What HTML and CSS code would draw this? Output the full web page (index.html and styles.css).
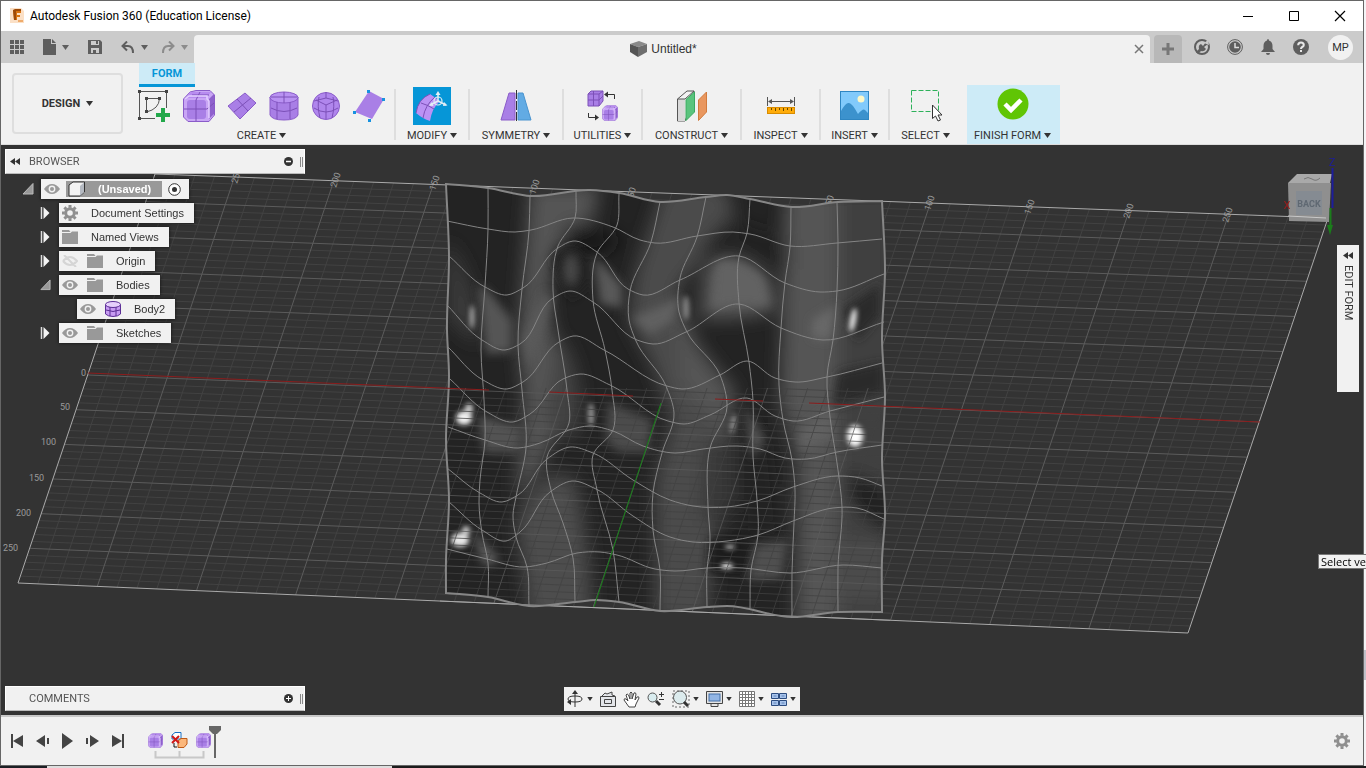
FILE: index.html
```html
<!DOCTYPE html>
<html lang="en">
<head>
<meta charset="utf-8">
<title>Autodesk Fusion 360 (Education License)</title>
<link rel="stylesheet" href="styles.css">
</head>
<body>
<svg class="defs" aria-hidden="true">
  <defs>
    <symbol id="caret" viewBox="0 0 7 5"><path d="M0 0H7L3.500 5Z" fill="currentColor"/></symbol>
    <symbol id="eye" viewBox="0 0 16 12"><path d="M0 6Q3.500 1 8 1T16 6Q12.500 11 8 11T0 6Z" fill="#999"/><circle cx="8" cy="6" r="3.400" fill="#f1f1f1"/><circle cx="8" cy="6" r="2" fill="#999"/></symbol>
    <symbol id="folder" viewBox="0 0 16 14"><path d="M0 0H7L8.500 2H0ZM0 3H8.500L10 1.500H16V14H0Z" fill="#999"/></symbol>
    <symbol id="gear" viewBox="0 0 16 16"><path d="M8 2.800V0M8 13.200V16M2.800 8H0M13.200 8H16M4.300 4.300L2.400 2.400M11.700 11.700L13.600 13.600M4.300 11.700L2.400 13.600M11.700 4.300L13.600 2.400" stroke="#8f8f8f" stroke-width="3"/><circle cx="8" cy="8" r="4.300" fill="none" stroke="#8f8f8f" stroke-width="3"/></symbol>
    <symbol id="closed" viewBox="0 0 10 14"><path d="M1 1V13" stroke="#ddd" stroke-width="1.500"/><path d="M3 1L9 7L3 13Z" fill="#f4f4f4"/></symbol>
    <symbol id="open" viewBox="0 0 12 12"><path d="M11 0.500V11H1Z" fill="#999" stroke="#bbb"/></symbol>
    <symbol id="formbox" viewBox="0 0 32 32">
      <path d="M7 2L13 0.500H27L31.500 5V25L26 31.500H5L0.500 27V9Z" fill="#c9a6f5" stroke="#8a5cc9"/>
      <path d="M7 2H28L23 8H3Z" fill="#b88cf0"/><path d="M26 9L31 4V24L26 29Z" fill="#8f61cd"/>
      <rect x="4" y="10" width="19" height="19" rx="3" fill="#a97fe6"/>
      <path d="M13 10L17 2M13 10V31M1 19H24L31 13M9 5H26" fill="none" stroke="#7c50b8"/>
      <path d="M2 9L6 6H24V9L26 11V28" fill="none" stroke="#e3cfff" stroke-width="1.500"/>
    </symbol>
    <symbol id="rewind" viewBox="0 0 10 7"><path d="M5 0V7L0 3.500ZM10 0V7L5 3.500Z" fill="#333"/></symbol>
  </defs>
</svg>

<main class="window">
  <header class="titlebar">
    <svg class="logo" width="16" height="16" viewBox="0 0 16 16"><path d="M1 0H12L15 3V15H1Z" fill="#fbe0c6"/><path d="M4 2H12V5H8V7H11V9H8V12H5Z" fill="#d9730f"/><path d="M4 2L6 1H12V3H7V12H5Z" fill="#9d4a08"/><path d="M9 12H14V14H9Z" fill="#efac6c"/></svg>
    <h1 class="app-name">Autodesk Fusion 360 (Education License)</h1>
    <button class="win-btn" aria-label="Minimize"><svg width="12" height="12"><path d="M1 6.500H11" stroke="#000"/></svg></button>
    <button class="win-btn" aria-label="Maximize"><svg width="12" height="12"><path d="M1.500 1.500H10.500V10.500H1.500Z" fill="none" stroke="#000"/></svg></button>
    <button class="win-btn" aria-label="Close"><svg width="12" height="12"><path d="M1 1L11 11M11 1L1 11" stroke="#000" stroke-width="1.200"/></svg></button>
  </header>

  <div class="tabbar">
    <div class="quick">
      <button class="qbtn" aria-label="Data panel"><svg width="14" height="14"><path d="M0 0h4v4h-4zM5 0h4v4h-4zM10 0h4v4h-4zM0 5h4v4h-4zM5 5h4v4h-4zM10 5h4v4h-4zM0 10h4v4h-4zM5 10h4v4h-4zM10 10h4v4h-4z" fill="#5e5e5e"/></svg></button>
      <button class="qbtn" aria-label="File"><svg width="13" height="16"><path d="M0 0H8V5H13V16H0ZM9 0L13 4H9Z" fill="#5e5e5e"/></svg><svg class="caret" width="7" height="5"><use href="#caret"/></svg></button>
      <button class="qbtn" aria-label="Save"><svg width="14" height="14"><path d="M0 0H12L14 2V14H0Z" fill="#5e5e5e"/><path d="M3 1H11V5H3ZM3 8H11V13H3Z" fill="#cbcbcb"/><path d="M8 1h2v3h-2zM5 10h3v4h-3z" fill="#5e5e5e"/></svg></button>
      <button class="qbtn" aria-label="Undo"><svg width="14" height="13"><path d="M1 5H7Q12 5 12 12M6 0.500L1.500 5L6 9.500" fill="none" stroke="#5e5e5e" stroke-width="2"/></svg><svg class="caret" width="7" height="5"><use href="#caret"/></svg></button>
      <button class="qbtn faded" aria-label="Redo"><svg width="14" height="13"><path d="M13 5H7Q2 5 2 12M8 0.500L12.500 5L8 9.500" fill="none" stroke="#8c8c8c" stroke-width="2"/></svg><svg class="caret" width="7" height="5"><use href="#caret"/></svg></button>
    </div>
    <div class="doc-tab">
      <div class="doc-title"><svg width="17" height="16" viewBox="0 0 17 16"><path d="M0 3L9 0L17 3L8 6Z" fill="#8a8a8a"/><path d="M0 3L8 6V16L0 11Z" fill="#555"/><path d="M8 6L17 3V11L8 16Z" fill="#6e6e6e"/></svg><span>Untitled*</span></div>
      <button class="doc-close" aria-label="Close document"><svg width="10" height="10"><path d="M1 1L9 9M9 1L1 9" stroke="#777" stroke-width="1.500"/></svg></button>
    </div>
    <button class="new-tab" aria-label="New design"><svg width="14" height="14"><path d="M7 1V13M1 7H13" stroke="#777" stroke-width="3"/></svg></button>
    <div class="account">
      <button class="abtn" aria-label="Extensions"><svg width="16" height="16"><circle cx="8" cy="8" r="7" fill="none" stroke="#5e5e5e" stroke-width="2"/><path d="M2 13L5 10Q4 6 7 5L9 7L12 3L14 5L10 8L12 10Q10 13 7 12L4 15Z" fill="#5e5e5e"/><path d="M10 4L14 1L15 6Z" fill="#cbcbcb"/></svg></button>
      <button class="abtn" aria-label="Job status"><svg width="16" height="16"><circle cx="8" cy="8" r="7.400" fill="none" stroke="#5e5e5e"/><circle cx="8" cy="8" r="5.800" fill="#5e5e5e"/><path d="M8 4V8.500H12" fill="none" stroke="#ddd" stroke-width="1.500"/></svg></button>
      <button class="abtn" aria-label="Notifications"><svg width="14" height="16"><path d="M7 0Q8 0 8 1.500Q11.500 2.500 11.500 7V10L14 13H0L2.500 10V7Q2.500 2.500 6 1.500Q6 0 7 0ZM5 14H9Q9 16 7 16T5 14Z" fill="#5e5e5e"/></svg></button>
      <button class="abtn" aria-label="Help"><svg width="16" height="16"><circle cx="8" cy="8" r="8" fill="#5e5e5e"/><path d="M5.200 6.200Q5.200 3.500 8 3.500T10.800 6Q10.800 7.200 9.200 8Q8 8.600 8 10" fill="none" stroke="#e8e8e8" stroke-width="2"/><rect x="7" y="11" width="2" height="2" fill="#e8e8e8"/></svg></button>
      <button class="avatar">MP</button>
    </div>
  </div>

  <section class="ribbon">
    <button class="workspace">DESIGN <svg width="7" height="5"><use href="#caret"/></svg></button>
    <div class="ribbon-main">
      <button class="mode-tab">FORM</button>
      <div class="groups">
        <div class="group create">
          <div class="icons">
            <svg width="34" height="34" viewBox="0 0 34 34"><path d="M2.500 2.500H29.500V19M2.500 2.500V29.500H18" fill="none" stroke="#555"/><path d="M9.500 9.500H22.500Q22 20 9.500 23V9.500" fill="none" stroke="#555"/><path d="M1 1h3v3h-3zM28 1h3v3h-3zM1 28h3v3h-3zM8 8h3v3h-3zM21 8h3v3h-3zM8 21h3v3h-3z" fill="#444"/><path d="M26 19V33M19 26H33" stroke="#22a84a" stroke-width="4"/></svg>
            <svg width="32" height="32"><use href="#formbox"/></svg>
            <svg width="30" height="28" viewBox="0 0 30 28"><path d="M18 1L29 11L13 27L1 14Z" fill="#a97fe6" stroke="#8a5cc9"/><path d="M10 7L21 19M24 6L7 20" stroke="#7c50b8"/></svg>
            <svg width="30" height="30" viewBox="0 0 30 30"><path d="M1 6V24Q3 29 15 29T29 24V6Z" fill="#a97fe6" stroke="#8a5cc9"/><ellipse cx="15" cy="6.500" rx="14" ry="5.500" fill="#b992f2" stroke="#8a5cc9"/><path d="M2 17Q15 24 28 17M8 11V28M21 11V28M15 1V12M2 6H28" fill="none" stroke="#7c50b8"/></svg>
            <svg width="30" height="30" viewBox="0 0 30 30"><circle cx="15" cy="15" r="13.500" fill="#b086ed" stroke="#8a5cc9"/><path d="M15 1V7L27 10M15 7L3 10M5 9L15 14L26 9M15 14V28M3 17Q15 25 27 17M8 6Q6 15 9 27M22 6Q24 15 21 27" fill="none" stroke="#7c50b8"/></svg>
            <svg width="34" height="34" viewBox="0 0 34 34"><path d="M16 2L31 10L19 30L2 23Z" fill="#a97fe6"/><path d="M14 1h3v3h-3zM29 9h3v3h-3zM0 22h3v3h-3zM15 30h3v3h-3z" fill="#1692e0"/></svg>
          </div>
          <button class="glabel">CREATE <svg width="7" height="5"><use href="#caret"/></svg></button>
        </div>
        <div class="group">
          <div class="icons"><svg class="active" width="38" height="38" viewBox="0 0 38 38"><path d="M3 26Q5 12 17 7L27 14Q19 21 17 34Q10 32 3 26Z" fill="#bb92f5"/><path d="M8 16Q15 18 21 22M10 31Q12 18 22 10M3 26Q5 12 17 7" fill="none" stroke="#7c50b8"/><path d="M25 14V6M25 14L17 18M25 14L33 18" stroke="#e3eef5" stroke-width="1.500"/><circle cx="25" cy="14" r="4" fill="none" stroke="#e3eef5" stroke-width="1.200"/><path d="M22.500 8L25 4L27.500 8ZM19 15L16 18.500L20.500 19ZM31 15L34.500 18.500L30 19Z" fill="#e3eef5"/></svg></div>
          <button class="glabel">MODIFY <svg width="7" height="5"><use href="#caret"/></svg></button>
        </div>
        <div class="group">
          <div class="icons"><svg width="32" height="32" viewBox="0 0 32 32"><path d="M9 3H15V30H1Z" fill="#a97fe6" stroke="#8a5cc9"/><path d="M18 3H23L31 30H18Z" fill="#62abe4" stroke="#4a94cf"/><path d="M16.500 0V32" stroke="#333" stroke-dasharray="9 2"/></svg></div>
          <button class="glabel">SYMMETRY <svg width="7" height="5"><use href="#caret"/></svg></button>
        </div>
        <div class="group">
          <div class="icons"><svg width="32" height="32" viewBox="0 0 32 32"><path d="M1 4L4 1H16V11L12 16H1Z" fill="#a97fe6" stroke="#7c50b8"/><path d="M1 4H12V16M12 4L16 1M1 10H12L16 6M6.500 1V16" fill="none" stroke="#7c50b8"/><path d="M27.500 9V4.500H20M1.500 23V27.500H9" fill="none" stroke="#333"/><path d="M21 1.500L17 4.500L21 7.500ZM8 24.500L12 27.500L8 30.500Z" fill="#333"/><svg x="15" y="15" width="16" height="16"><use href="#formbox"/></svg></svg></div>
          <button class="glabel">UTILITIES <svg width="7" height="5"><use href="#caret"/></svg></button>
        </div>
        <div class="group">
          <div class="icons"><svg width="32" height="32" viewBox="0 0 32 32"><path d="M1.500 9L11 1H18V9L9 31H1.500Z" fill="#f3f3f3" stroke="#555"/><path d="M2 9H9V31H2Z" fill="#d9d9d9"/><path d="M1.500 9H9L18 1" fill="none" stroke="#555"/><path d="M10 9.500L18.500 2V22L10 30.500Z" fill="#5ac47d" stroke="#3aa960"/><path d="M22.500 10L30.500 2V22L22.500 30.500Z" fill="#e9975f" stroke="#d27b3d"/></svg></div>
          <button class="glabel">CONSTRUCT <svg width="7" height="5"><use href="#caret"/></svg></button>
        </div>
        <div class="group">
          <div class="icons"><svg width="30" height="18" viewBox="0 0 30 18"><path d="M1.500 0V9M28.500 0V9M3 4.500H27" stroke="#555"/><path d="M2 4.500L6 2V7ZM28 4.500L24 2V7Z" fill="#555"/><rect x="1.500" y="10.500" width="27" height="6" fill="#ffac0a" stroke="#d98c00"/><path d="M5.500 11v2M9.500 11v3M13.500 11v2M17.500 11v3M21.500 11v2M25.500 11v3" stroke="#6b4a00"/></svg></div>
          <button class="glabel">INSPECT <svg width="7" height="5"><use href="#caret"/></svg></button>
        </div>
        <div class="group">
          <div class="icons"><svg width="30" height="30" viewBox="0 0 30 30"><rect x="0.500" y="0.500" width="28" height="28" fill="#82cafb" stroke="#2f86c2"/><circle cx="21" cy="8" r="3.500" fill="#fdf8c8"/><path d="M1 20Q6 11 9 12Q12 12 18 23Q23 17 25 19L28 22V28H1Z" fill="#3c92cd"/></svg></div>
          <button class="glabel">INSERT <svg width="7" height="5"><use href="#caret"/></svg></button>
        </div>
        <div class="group select">
          <div class="icons"><svg width="32" height="34" viewBox="0 0 32 34"><rect x="1.500" y="1.500" width="27" height="21" fill="none" stroke="#2eb15a" stroke-dasharray="5 2"/><path d="M22.500 16V29.500L25.500 27L28 32L30.500 31L28 26H32Z" fill="#fff" stroke="#333"/></svg></div>
          <button class="glabel">SELECT <svg width="7" height="5"><use href="#caret"/></svg></button>
        </div>
        <div class="group finish">
          <div class="icons"><svg width="32" height="32"><circle cx="16" cy="16" r="15.500" fill="#60c505"/><path d="M8 16L14 22L24 12" fill="none" stroke="#fff" stroke-width="4.500"/></svg></div>
          <button class="glabel">FINISH FORM <svg width="7" height="5"><use href="#caret"/></svg></button>
        </div>
      </div>
    </div>
  </section>

  <section class="viewport">
    <svg class="scene" viewBox="1 145 1362 570" preserveAspectRatio="xMidYMid slice">
      <defs>
        <clipPath id="sheet"><path id="sheet-clip"/></clipPath>
        <clipPath id="front"><path d="M440 388H890V628H440Z"/></clipPath>
        <filter id="b2" x="-100%" y="-100%" width="300%" height="300%"><feGaussianBlur stdDeviation="2.500"/></filter>
        <filter id="b5" x="-50%" y="-50%" width="200%" height="200%"><feGaussianBlur stdDeviation="5"/></filter>
        <filter id="b8" x="-50%" y="-50%" width="200%" height="200%"><feGaussianBlur stdDeviation="9"/></filter>
      </defs>
      <g id="grid-back"></g>
      <g class="ruler">
        <text x="81" y="376">0</text><text x="60" y="410">50</text><text x="41" y="445">100</text><text x="29" y="481">150</text><text x="16" y="516">200</text><text x="3" y="551">250</text>
        <text transform="translate(237 184) rotate(-72)">250</text><text transform="translate(336 188) rotate(-72)">200</text><text transform="translate(435 191) rotate(-72)">150</text><text transform="translate(535 195) rotate(-72)">100</text><text transform="translate(633 198) rotate(-72)">50</text><text transform="translate(831 206) rotate(-72)">50</text><text transform="translate(930 211) rotate(-72)">100</text><text transform="translate(1030 215) rotate(-72)">150</text><text transform="translate(1129 219) rotate(-72)">200</text><text transform="translate(1228 223) rotate(-72)">250</text>
      </g>
      <g clip-path="url(#sheet)">
        <rect x="440" y="180" width="450" height="440" fill="#232323"/>
        <g filter="url(#b8)">
          <path d="M446 240Q480 280 478 345L448 320Z" fill="#3a3a3a"/>
          <path d="M530 185H600L592 222Q560 225 552 270Q545 300 555 340L566 420Q545 450 540 470L516 500L524 400L518 340Z" fill="#545454"/>
          <path d="M560 335Q590 380 575 440L545 420Z" fill="#424242"/>
          <path d="M664 185H725L735 215Q700 260 676 290L700 350L724 390L730 440L720 500L708 620H655V480L672 420L650 360L628 320L636 270Z" fill="#4c4c4c"/>
          <path d="M705 440H735V500L725 520H700Z" fill="#383838"/>
          <path d="M785 190H842L842 630H796L797 460L780 400L782 330Z" fill="#545454"/>
          <path d="M838 190H895V630H838Z" fill="#404040"/>
          <path d="M705 265Q740 245 770 280L775 310Q750 320 700 318Z" fill="#585858"/>
          <path d="M516 520Q545 460 575 480Q590 540 592 620H530Z" fill="#4e4e4e"/>
          <path d="M680 310Q690 340 735 390L728 440L680 380Z" fill="#555"/>
          <path d="M725 220Q760 235 788 240V270L750 250L700 250Z" fill="#222"/>
          <path d="M845 470L890 490V540L850 500Z" fill="#1f1f1f"/>
          <path d="M845 540H890V600H840Z" fill="#4c4c4c"/>
          <path d="M565 225Q600 225 622 240L600 255L568 250Z" fill="#161616"/>
          <path d="M738 425L775 440L785 530L738 535Z" fill="#222"/>
        </g>
        <g filter="url(#b5)">
          <path d="M478 285L488 290L512 320L512 352L486 354Z" fill="#555"/>
          <path d="M478 415L522 428L518 452L484 452Z" fill="#535353"/>
          <path d="M594 255L622 285L622 308L600 304Z" fill="#585858"/>
          <path d="M632 318L664 305L682 295L672 322L650 334Z" fill="#606060"/>
          <path d="M608 402L652 420L648 452L618 452L606 440Z" fill="#4c4c4c"/>
          <path d="M716 262Q740 255 764 278L770 306L738 304L712 308Z" fill="#626262"/>
          <path d="M755 545L788 540L782 578L748 580Z" fill="#505050"/>
          <path d="M472 530L500 560L484 566Z" fill="#606060"/>
          <path d="M812 320L836 305L830 340L812 338Z" fill="#686868"/>
          <path d="M842 310L880 284V315L858 340Z" fill="#2a2a2a"/>
          <path d="M838 372L884 362V392L832 408Z" fill="#2c2c2c"/>
          <path d="M800 430L830 408L834 438L800 452Z" fill="#606060"/>
          <path d="M710 538L752 538L748 575L708 572Z" fill="#1b1b1b"/>
          <path d="M745 405L765 440L752 458Z" fill="#555"/>
          <path d="M552 262Q556 246 572 246Q590 248 592 280L572 300Z" fill="#222"/>
          <ellipse cx="571" cy="270" rx="6" ry="15" fill="#4c4c4c"/>
          <path d="M522 340L545 290L552 300L530 370Z" fill="#5a5a5a"/>
        </g>
        <g filter="url(#b2)">
          <ellipse cx="472" cy="317" rx="2" ry="12" fill="#bbb"/>
          <ellipse cx="464" cy="418" rx="8" ry="7" fill="#f4f4f4"/><ellipse cx="469" cy="409" rx="4" ry="6" fill="#ccc"/>
          <ellipse cx="460" cy="540" rx="9" ry="7" fill="#e8e8e8"/><ellipse cx="466" cy="531" rx="4" ry="5" fill="#ccc"/>
          <ellipse cx="591" cy="415" rx="3" ry="12" fill="#999"/>
          <ellipse cx="853" cy="320" rx="3" ry="12" fill="#eee" transform="rotate(10 853 320)"/>
          <ellipse cx="855" cy="436" rx="8" ry="11" fill="#fff"/>
          <ellipse cx="733" cy="424" rx="2" ry="10" fill="#aaa" transform="rotate(10 733 424)"/>
          <ellipse cx="686" cy="308" rx="3" ry="12" fill="#888"/>
          <ellipse cx="727" cy="566" rx="6" ry="3" fill="#fff"/><ellipse cx="730" cy="547" rx="5" ry="2" fill="#ccc"/>
        </g>
      </g>
      <g id="grid-front" clip-path="url(#front)"></g>
      <g id="mesh"></g>
      <path d="M88 373L489 390M549 392L633 396M715 399L763 401M809 403L1260 422" stroke="#8c1c1c" fill="none"/>
      <path d="M594 607L661 403" stroke="#188018"/>
      <g class="cube">
        <path d="M1288 183L1297 174L1332 174L1330 183Z" fill="#a9a9a9"/>
        <path d="M1288 183L1331 183L1329 222L1289 221Z" fill="#8f8f8f"/>
        <path d="M1296 191H1322V215H1296Z" fill="#858b92"/>
        <path d="M1304 179Q1308 176 1312 179T1320 178" fill="none" stroke="#777"/>
        <path d="M1332.500 168V208" stroke="#1d1d9c" stroke-width="2"/><path d="M1330.500 208V228" stroke="#1b7d1b" stroke-width="2"/><path d="M1327 225H1333L1330 235Z" fill="#1b7d1b"/>
        <text class="cube-face" x="1309" y="207">BACK</text>
        <text class="axis-z" x="1332" y="166">Z</text><text class="axis-x" x="1287" y="209">X</text>
        <path d="M1288 216L1326 218" stroke="#c8c8c8"/>
      </g>
    </svg>

    <div class="left-dock">
      <div>
        <div class="panel-head">
          <button class="plain" aria-label="Collapse"><svg width="10" height="7"><use href="#rewind"/></svg></button>
          <h2 class="panel-title">BROWSER</h2>
          <button class="plain" aria-label="Minimize browser"><svg width="9" height="9"><circle cx="4.500" cy="4.500" r="4.500" fill="#333"/><path d="M2 4.500H7" stroke="#fff" stroke-width="1.500"/></svg></button>
          <span class="grip"></span>
        </div>
        <ul class="tree">
          <li class="l0"><svg width="12" height="12"><use href="#open"/></svg><span class="node"><svg width="16" height="12"><use href="#eye"/></svg><span class="root"><svg width="18" height="16" viewBox="0 0 18 16"><path d="M1 4L5 1H16.500V11L12 15H1Z" fill="#f2f2f2" stroke="#333"/><path d="M12 15V5L16 1.500V11Z" fill="#b5bac2"/></svg><b>(Unsaved)</b></span><svg width="13" height="13"><circle cx="6.500" cy="6.500" r="5.800" fill="#fff" stroke="#333"/><circle cx="6.500" cy="6.500" r="2.500" fill="#333"/></svg></span></li>
          <li class="l1"><svg width="10" height="14"><use href="#closed"/></svg><span class="node"><svg width="16" height="16"><use href="#gear"/></svg><span class="name">Document Settings</span></span></li>
          <li class="l1"><svg width="10" height="14"><use href="#closed"/></svg><span class="node"><svg width="16" height="14"><use href="#folder"/></svg><span class="name">Named Views</span></span></li>
          <li class="l1"><svg width="10" height="14"><use href="#closed"/></svg><span class="node"><svg width="16" height="12" viewBox="0 0 16 12"><path d="M1 6Q8 -2 15 6Q8 14 1 6M2 0L14 12" fill="none" stroke="#d5d5d5" stroke-width="2"/></svg><svg class="second" width="16" height="14"><use href="#folder"/></svg><span class="name">Origin</span></span></li>
          <li class="l1"><svg width="12" height="12"><use href="#open"/></svg><span class="node"><svg width="16" height="12"><use href="#eye"/></svg><svg class="second" width="16" height="14"><use href="#folder"/></svg><span class="name">Bodies</span></span></li>
          <li class="l2"><span class="node"><svg width="16" height="12"><use href="#eye"/></svg><svg class="second" width="16" height="16" viewBox="0 0 16 16"><path d="M0.500 3.500V13Q3 15.500 8 15.500T15.500 13V3.500Z" fill="#c79bf2" stroke="#5c2f96"/><ellipse cx="8" cy="3.500" rx="7.500" ry="3" fill="#e6d0fb" stroke="#5c2f96"/><path d="M1 9Q8 12 15 9M5 6V15M11 6V15" fill="none" stroke="#5c2f96"/></svg><span class="name">Body2</span></span></li>
          <li class="l1"><svg width="10" height="14"><use href="#closed"/></svg><span class="node"><svg width="16" height="12"><use href="#eye"/></svg><svg class="second" width="16" height="14"><use href="#folder"/></svg><span class="name">Sketches</span></span></li>
        </ul>
      </div>
      <div class="panel-head">
        <h2 class="panel-title solo">COMMENTS</h2>
        <button class="plain" aria-label="Add comment"><svg width="9" height="9"><circle cx="4.500" cy="4.500" r="4.500" fill="#333"/><path d="M2 4.500H7M4.500 2V7" stroke="#fff"/></svg></button>
        <span class="grip"></span>
      </div>
    </div>

    <nav class="navbar">
      <button class="plain" aria-label="Orbit"><svg width="18" height="18" viewBox="0 0 18 18"><path d="M16 9Q16 12 9 12Q2 12 2 9T9 6Q16 6 16 9M9 2V17" fill="none" stroke="#333"/><path d="M6 4L9 0L12 4ZM1 12L5 9V15Z" fill="#333"/></svg><svg class="caret" width="6" height="4" viewBox="0 0 7 5"><use href="#caret"/></svg></button>
      <button class="plain" aria-label="Look at"><svg width="16" height="16" viewBox="0 0 16 16"><path d="M0.500 5.500H15.500V15.500H0.500ZM4.500 8.500H11.500V12.500H4.500ZM2 5L5 2L7 3L12 1V4L15 5" fill="#e4e6ea" stroke="#444"/></svg></button>
      <button class="plain" aria-label="Pan"><svg width="17" height="17" viewBox="0 0 17 17"><path d="M6 16L1 9Q1 7 3 8L5 10L3 4Q4 2 5.500 4L7 8V2Q8 0 9 2V8L11 2Q12.500 1 13 3L12 9L14 6Q16 5 16 7L13 13L12 16Z" fill="#fff" stroke="#444"/></svg></button>
      <button class="plain" aria-label="Zoom"><svg width="18" height="16" viewBox="0 0 18 16"><circle cx="5.500" cy="6.500" r="4.500" fill="#d9ecef" stroke="#555"/><path d="M9 10L13 14" stroke="#333" stroke-width="3"/><path d="M14.500 1V6M12 3.500H17M12 8.500H17" stroke="#333"/></svg></button>
      <button class="plain" aria-label="Fit"><svg width="18" height="18" viewBox="0 0 18 18"><path d="M1 1H17V17H1Z" fill="none" stroke="#666" stroke-dasharray="2 2"/><circle cx="8" cy="7.500" r="6.500" fill="#dcebed" stroke="#555"/><path d="M12 12L16 16" stroke="#333" stroke-width="3"/></svg><svg class="caret" width="6" height="4" viewBox="0 0 7 5"><use href="#caret"/></svg></button>
      <button class="plain" aria-label="Display settings"><svg width="17" height="16" viewBox="0 0 17 16"><path d="M0.500 0.500H16.500V12.500H0.500ZM5 13V15.500H12V13" fill="#e3e3e3" stroke="#444"/><rect x="3" y="3" width="11" height="7" fill="#92b5e4" stroke="#426fa8"/></svg><svg class="caret" width="6" height="4" viewBox="0 0 7 5"><use href="#caret"/></svg></button>
      <button class="plain" aria-label="Grid and snaps"><svg width="16" height="16"><path d="M0.500 0.500H15.500V15.500H0.500ZM3.500 0V16M6.500 0V16M9.500 0V16M12.500 0V16M0 3.500H16M0 6.500H16M0 9.500H16M0 12.500H16" fill="#fff" stroke="#777"/></svg><svg class="caret" width="6" height="4" viewBox="0 0 7 5"><use href="#caret"/></svg></button>
      <button class="plain" aria-label="Viewports"><svg width="16" height="13"><path d="M0.500 0.500H7.500V5.500H0.500ZM8.500 0.500H15.500V5.500H8.500ZM0.500 7.500H7.500V12.500H0.500ZM8.500 7.500H15.500V12.500H8.500Z" fill="#a8c4ec" stroke="#2c4c80"/><path d="M2.500 3H5.500M10.500 3H13.500M2.500 10H5.500M10.500 10H13.500" stroke="#5f82b8"/></svg><svg class="caret" width="6" height="4" viewBox="0 0 7 5"><use href="#caret"/></svg></button>
    </nav>

    <button class="edit-form"><svg width="10" height="7"><use href="#rewind"/></svg><span>EDIT FORM</span></button>
  </section>

  <footer class="timeline">
    <div class="playback">
      <button class="plain" aria-label="To start"><svg width="13" height="14"><path d="M1 0V14" stroke="#444" stroke-width="2"/><path d="M12 1V13L2 7Z" fill="#444"/></svg></button>
      <button class="plain" aria-label="Step back"><svg width="13" height="14"><path d="M9 1V13L0 7ZM11 4h2v6h-2z" fill="#444"/></svg></button>
      <button class="plain" aria-label="Play"><svg width="13" height="16"><path d="M1 0L12 8L1 16Z" fill="#444"/></svg></button>
      <button class="plain" aria-label="Step forward"><svg width="13" height="14"><path d="M4 1V13L13 7ZM0 4h2v6h-2z" fill="#444"/></svg></button>
      <button class="plain" aria-label="To end"><svg width="13" height="14"><path d="M12 0V14" stroke="#444" stroke-width="2"/><path d="M1 1V13L11 7Z" fill="#444"/></svg></button>
    </div>
    <svg class="history" width="76" height="34" viewBox="0 0 76 34">
      <path d="M8.500 25V31.500H56.500V25M32.500 25V31" fill="none" stroke="#c8c8c8" stroke-width="2"/>
      <svg x="1" y="7" width="15" height="15"><use href="#formbox"/></svg>
      <svg x="49" y="7" width="15" height="15"><use href="#formbox"/></svg>
      <path d="M25 9L28 6.500H34V13H25Z" fill="#fff" stroke="#1670c5"/><path d="M31 15L34 12.500H40V18L37 21.500H31Z" fill="#fbb77b" stroke="#c05a16"/><path d="M25 10L32 17M32 10L25 17" stroke="#d01818" stroke-width="2"/><path d="M27 17V21H30" fill="none" stroke="#111"/>
      <path d="M62 0H74V4L70 8H66L62 4Z" fill="#666"/><path d="M68 6V32" stroke="#666" stroke-width="2"/>
    </svg>
    <button class="plain settings" aria-label="Timeline settings"><svg width="16" height="16"><use href="#gear"/></svg></button>
  </footer>
</main>
<div class="tooltip" role="tooltip">Select ve</div>
<div class="page-thumb"></div>
<script src="scene.js"></script>
</body>
</html>
```
FILE: styles.css
```css
* { box-sizing: border-box; }
body { margin: 0; min-height: 100vh; overflow: hidden; position: relative; background: linear-gradient(to right, #1b1f24 0 47px, #dedede 47px 392px, #1c1c1c 392px); font-family: Roboto, "Liberation Sans", sans-serif; font-size: 11px; color: #333; }
button { font: inherit; color: inherit; background: none; border: 0; padding: 0; margin: 0; display: flex; align-items: center; justify-content: center; }
h1, h2, ul { margin: 0; padding: 0; font-weight: normal; list-style: none; }
svg { flex: none; display: block; }
.defs { position: absolute; width: 0; height: 0; }
.plain { gap: 3px; }

.window { display: grid; grid-template-rows: 31px 32px 82px 1fr 50px; height: calc(100vh - 2px); margin-right: 2px; border: 1px solid #666; border-top: 0; box-shadow: 2px 0 #f4f4f6; }

.titlebar { display: flex; align-items: center; background: #fff; border-top: 1px solid #666; padding-left: 8px; }
.app-name { flex: 1; margin-left: 5px; font: 12px Roboto, sans-serif; color: #000; }
.win-btn { width: 46px; height: 30px; }

.tabbar { display: flex; align-items: stretch; background: #cbcbcb; }
.quick { display: flex; align-items: center; width: 193px; padding-left: 9px; gap: 19px; color: #5e5e5e; }
.qbtn { height: 20px; }
.qbtn .caret { margin-left: 6px; }
.faded { color: #8c8c8c; }
.quick .faded { margin-left: -6px; }
.doc-tab { flex: 1; display: flex; align-items: center; margin-top: 4px; padding-right: 5px; background: #f1f1f1; border-radius: 4px 4px 0 0; }
.doc-title { flex: 1; display: flex; align-items: center; justify-content: center; gap: 4px; font-family: "Liberation Sans", sans-serif; font-size: 12px; }
.doc-close { width: 12px; height: 20px; }
.new-tab { width: 28px; margin: 4px 0 0 4px; background: #b8b8b8; border-radius: 4px 4px 0 0; }
.account { display: flex; align-items: center; padding: 0 10px 0 3px; }
.abtn { width: 33px; height: 24px; }
.avatar { width: 25px; height: 25px; margin-left: 11px; border-radius: 50%; background: #f1f1f1; font-size: 11px; }

.ribbon { display: flex; background: #f1f1f1; border-bottom: 1px solid #ddd; }
.workspace { width: 111px; margin: 10px 0 10px 11px; gap: 6px; border: 2px solid #dedede; border-radius: 4px; font-weight: bold; }
.ribbon-main { display: flex; flex-direction: column; margin-left: 10px; }
.mode-tab { width: 56px; height: 24px; margin-left: 6px; background: #cdebf7; border-bottom: 3px solid #0696d7; color: #0696d7; font-weight: bold; font-size: 11px; }
.groups { flex: 1; display: grid; grid-template-columns: 263px 74px 94px 79px 99px 79px 69px 77px 93px; }
.group { position: relative; display: flex; flex-direction: column; align-items: center; justify-content: space-between; padding-right: 2px; padding-bottom: 1px; }
.create { padding-right: 6px; }
.select { padding-right: 6px; }
.group:nth-child(-n+7)::after { content: ""; position: absolute; right: 0; top: 2px; bottom: 4px; width: 2px; background: #dedede; }
.icons { display: flex; align-items: center; gap: 12px; height: 38px; }
.glabel { gap: 3px; height: 16px; }
.active { background: #0696d7; }
.finish { background: #cdebf7; margin-top: -2px; }

.viewport { position: relative; min-height: 0; overflow: hidden; background: #333; }
.scene { position: absolute; inset: 0; width: 100%; height: 100%; }
.minor { stroke: #424242; fill: none; }
.major { stroke: #5c5c5c; fill: none; }
.border { stroke: #aaa; fill: none; }
#grid-front { opacity: 0.75; }
.iso { stroke: #858585; fill: none; }
.rim { stroke: #868686; stroke-width: 2; fill: none; }
.ruler { fill: #9a9a9a; font-size: 9px; }
.cube-face { fill: #5f6872; font-size: 9px; font-weight: bold; text-anchor: middle; }
.axis-z { fill: #1d1d9c; text-anchor: middle; }
.axis-x { fill: #9c1d1d; text-anchor: middle; }

.left-dock { position: absolute; top: 4px; bottom: 4px; left: 4px; width: 300px; display: flex; flex-direction: column; justify-content: space-between; }
.panel-head { display: flex; align-items: center; gap: 9px; height: 25px; padding: 0 1px 0 4px; background: #f1f1f1; border: 1px solid #fff; border-bottom: 1px solid #bbb; }
.panel-title { flex: 1; font-size: 11px; color: #555; }
.solo { margin-left: 19px; }
.grip { width: 3px; height: 10px; border: 1px solid #888; border-width: 0 1px; margin-left: -2px; }
.tree { display: flex; flex-direction: column; gap: 4px; padding-top: 5px; }
.tree li { display: flex; align-items: center; gap: 8px; height: 20px; }
.tree .l0 { padding-left: 17px; gap: 7px; }
.l1 { padding-left: 35px; }
.l1 > svg { width: 11px; }
.tree .l2 { padding-left: 72px; }
.node { display: flex; align-items: center; height: 20px; padding: 0 10px 0 3px; background: #f1f1f1; box-shadow: 0 0 3px #111; font-family: "Liberation Sans", sans-serif; }
.l0 .node { padding-right: 8px; gap: 6px; }
.root { display: flex; align-items: center; gap: 12px; height: 16px; padding: 0 11px 0 2px; background: #999; color: #fff; }
.name { margin-left: 13px; }
.second { margin-left: 9px; }

.navbar { position: absolute; left: 50%; bottom: 4px; transform: translateX(-50%); display: flex; align-items: center; gap: 7px; height: 24px; padding: 0 4px 0 2px; background: #f1f1f1; }
.edit-form { position: absolute; right: 4px; top: 100px; width: 22px; height: 147px; flex-direction: column; justify-content: flex-start; gap: 6px; padding-top: 7px; background: #f1f1f1; }
.edit-form span { writing-mode: vertical-rl; }

.timeline { display: flex; align-items: center; background: #f1f1f1; border-top: 2px solid #c8c8c8; padding: 0 13px 0 10px; }
.playback { display: flex; align-items: center; gap: 12px; }
.history { margin: 4px 0 0 23px; }
.settings { margin-left: auto; }
.tooltip { position: absolute; right: 0; top: 554px; width: 48px; height: 15px; padding-left: 2px; overflow: hidden; white-space: nowrap; background: #f1f1f1; border: 1px solid #777; border-right: 0; color: #000; font: 11px/13px "Open Sans", sans-serif; }
.page-thumb { position: absolute; right: 0; top: 650px; width: 2px; height: 30px; background: #c0c0c8; }
```
FILE: scene.js
```js
(function () {
const NS = 'http://www.w3.org/2000/svg';

function addPath(parent, cls, d) {
  const p = document.createElementNS(NS, 'path');
  p.setAttribute('class', cls);
  p.setAttribute('d', d);
  parent.appendChild(p);
}

// Ground plane: corners of the perspective grid and the number of cells per side.
const BL = [18, 583], BR = [1188, 633], TR = [1328, 218], TL = [155, 174];
const CELLS = 59;
const mix = (a, b, t) => [a[0] + (b[0] - a[0]) * t, a[1] + (b[1] - a[1]) * t];
const seg = (a, b) => 'M' + a.map(n => n.toFixed(1)) + 'L' + b.map(n => n.toFixed(1));

function drawGrid(parent) {
  let minor = '', major = '';
  for (let i = 1; i < CELLS; i++) {
    const t = i / CELLS;
    const lines = seg(mix(BR, BL, t), mix(TR, TL, t)) + seg(mix(BL, TL, t), mix(BR, TR, t));
    if (i % 5) minor += lines; else major += lines;
  }
  addPath(parent, 'minor', minor);
  addPath(parent, 'major', major);
  addPath(parent, 'border', seg(BL, BR) + seg(BR, TR) + seg(TR, TL) + seg(TL, BL));
}
drawGrid(document.getElementById('grid-back'));
drawGrid(document.getElementById('grid-front'));

// Smooth curve through a flat list of x, y values; tangents are weighted by chord length.
function spline(flat, join) {
  const p = [];
  for (let i = 0; i < flat.length; i += 2) p.push([flat[i], flat[i + 1]]);
  const last = p.length - 1;
  const len = i => Math.hypot(p[i + 1][0] - p[i][0], p[i + 1][1] - p[i][1]);
  const slope = (i, k) => (p[i + 1][k] - p[i][k]) / len(i);
  const tangent = (i, k) => {
    if (i === 0) return slope(0, k);
    if (i === last) return slope(last - 1, k);
    const h0 = len(i - 1), h1 = len(i);
    return (slope(i - 1, k) * h1 + slope(i, k) * h0) / (h0 + h1);
  };
  let d = (join ? 'L' : 'M') + p[0];
  for (let i = 0; i < last; i++) {
    const h = len(i) / 3, b = p[i], c = p[i + 1];
    d += 'C' + [b[0] + tangent(i, 0) * h, b[1] + tangent(i, 1) * h,
      c[0] - tangent(i + 1, 0) * h, c[1] - tangent(i + 1, 1) * h, c[0], c[1]].map(n => n.toFixed(1)).join(' ');
  }
  return d;
}

const columns = [
  [488,188,488,229,485,286,481,350,484,400,485,440,480,480,479,503,482,533,488,563,488,597],
  [530,196,529,231,522,289,518,345,522,390,526,448,516,497,513,515,516,537,527,567,529,605],
  [576,191,575,218,558,246,553,290,558,330,567,390,569,423,547,457,551,490,563,523,573,558,575,601],
  [619,194,617,225,597,253,593,300,605,350,612,390,613,430,593,455,597,490,613,550,619,602],
  [660,202,651,242,630,291,629,320,636,341,666,386,674,413,662,453,653,493,653,530,660,570,660,610],
  [706,197,697,237,680,278,679,312,687,332,720,375,727,407,710,448,708,507,710,543,707,570,707,607],
  [750,199,747,233,739,257,739,303,749,362,753,400,753,457,757,500,758,535,751,570,750,608],
  [791,207,790,247,785,282,781,328,779,385,783,420,792,460,795,490,794,523,792,572,792,616],
  [837,203,838,243,837,290,833,340,827,377,830,417,838,470,842,507,838,567,838,612]
];
const rows = [
  [447,221,488,229,515,232,531,230,573,218,613,227,640,240,655,243,697,236,733,232,750,234,790,246,837,243,882,239],
  [449,256,485,287,507,295,523,288,558,248,573,241,597,252,628,289,643,295,680,280,739,256,785,283,820,292,837,291,884,274],
  [447,305,482,340,505,350,520,344,553,298,570,291,593,302,637,340,653,344,686,332,739,304,781,328,823,340,884,322],
  [447,346,483,380,507,389,523,382,559,342,573,336,604,350,667,386,682,389,720,375,747,361,775,378,795,382,827,377,882,363],
  [450,379,487,412,513,422,530,414,563,379,580,374,610,385,668,421,684,424,710,415,747,398,775,416,793,421,830,411,884,397],
  [448,427,485,440,518,448,540,443,569,430,590,426,613,431,643,446,675,453,703,449,737,446,760,449,785,458,807,459,837,452,882,445],
  [447,468,480,493,502,502,518,495,547,459,570,447,593,453,633,480,670,500,693,506,727,507,757,501,793,487,837,476,860,478,882,486],
  [449,502,482,530,506,541,520,532,550,492,572,481,596,489,633,516,670,537,693,542,727,541,758,535,793,521,833,508,857,508,884,519],
  [447,549,487,559,524,567,547,563,577,553,600,552,617,555,655,569,675,571,707,568,743,568,790,573,843,565,882,568]
];
const topRim = [446,184,488,188,530,196,590,190,619,193,660,202,706,197,727,195,750,199,792,207,838,202,882,201];
const rightRim = [882,201,885,270,882,340,885,395,882,460,885,515,882,560,882,612];
const bottomRim = [882,612,838,612,792,617,727,606,707,607,660,611,619,602,596,600,575,602,529,606,488,597,446,593];
const leftRim = [446,593,446,560,449,500,446,440,449,375,447,330,449,256,446,184];

const mesh = document.getElementById('mesh');
addPath(mesh, 'iso', columns.concat(rows).map(line => spline(line)).join(''));
const outline = spline(topRim) + spline(rightRim, true) + spline(bottomRim, true) + spline(leftRim, true) + 'Z';
addPath(mesh, 'rim', outline);
document.getElementById('sheet-clip').setAttribute('d', outline);
}());
```
